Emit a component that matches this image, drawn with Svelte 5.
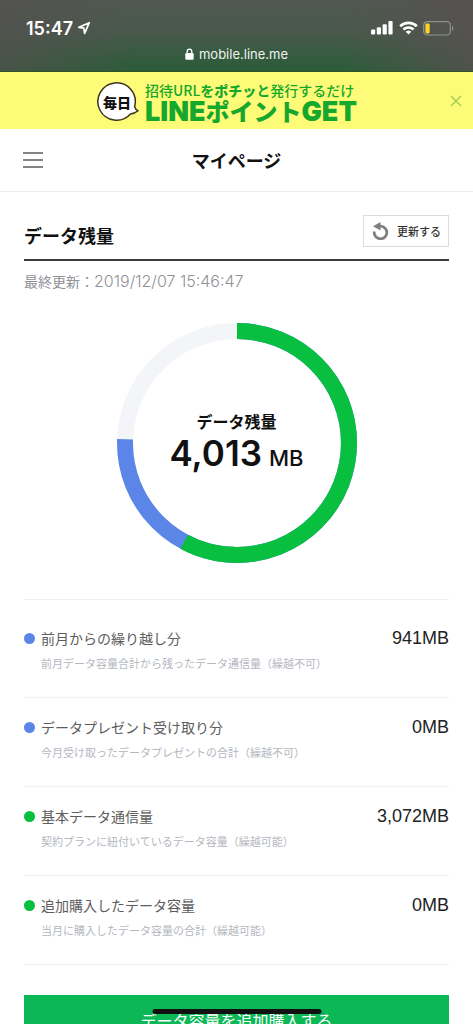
<script lang="ts">
	interface UsageItem {
		label: string;
		note: string;
		amount: number;
		color: string;
	}

	const items: UsageItem[] = [
		{
			label: '前月からの繰り越し分',
			note: '前月データ容量合計から残ったデータ通信量（繰越不可）',
			amount: 941,
			color: 'blue'
		},
		{
			label: 'データプレゼント受け取り分',
			note: '今月受け取ったデータプレゼントの合計（繰越不可）',
			amount: 0,
			color: 'blue'
		},
		{
			label: '基本データ通信量',
			note: '契約プランに紐付いているデータ容量（繰越可能）',
			amount: 3072,
			color: 'green'
		},
		{
			label: '追加購入したデータ容量',
			note: '当月に購入したデータ容量の合計（繰越可能）',
			amount: 0,
			color: 'green'
		}
	];

	const capacity = 5312;
	let showBanner = $state(true);

	const sumOf = (color: string) =>
		items.filter((item) => item.color === color).reduce((sum, item) => sum + item.amount, 0);

	const green = (sumOf('green') / capacity) * 100;
	const blue = (sumOf('blue') / capacity) * 100;
	const remaining = sumOf('green') + sumOf('blue');
</script>

<div class="screen">
	<div class="browser-bar">
		<div class="status">
			<span class="clock">
				15:47
				<svg width="14" height="14" viewBox="0 0 14 14" aria-hidden="true">
					<path d="M12.3 1.7 1.8 6.4l5 .7.8 5.2z" fill="none" stroke="#fff" stroke-width="1.7" stroke-linejoin="round" />
				</svg>
			</span>
			<span class="indicators">
				<svg width="23" height="14" viewBox="0 0 23 14" fill="#fff" aria-hidden="true">
					<rect x="0" y="8.5" width="4.2" height="5" rx="1" />
					<rect x="5.8" y="6.2" width="4.2" height="7.3" rx="1" />
					<rect x="11.6" y="3.2" width="4.2" height="10.3" rx="1" />
					<rect x="17.4" y="0" width="4.2" height="13.5" rx="1" />
				</svg>
				<svg width="19" height="14" viewBox="0 0 19 14" fill="none" stroke="#fff" aria-hidden="true">
					<path d="M1.2 5.2a12 12 0 0 1 16.6 0" stroke-width="2.6" />
					<path d="M4.4 8.5a7.4 7.4 0 0 1 10.2 0" stroke-width="2.5" />
					<path d="M9.5 13.6 6.7 10.8a4 4 0 0 1 5.6 0z" fill="#fff" stroke="none" />
				</svg>
				<svg width="31" height="15" viewBox="0 0 31 15" aria-hidden="true">
					<rect x="0.7" y="0.7" width="26.6" height="13.3" rx="3.6" fill="none" stroke="#8b948c" stroke-width="1.2" />
					<rect x="2.4" y="2.4" width="4.3" height="10" rx="1.4" fill="#fdd327" />
					<path d="M29 5v5c1.8-.7 1.8-4.3 0-5z" fill="#8b948c" />
				</svg>
			</span>
		</div>
		<div class="address">
			<svg width="9" height="12" viewBox="0 0 9 12" aria-hidden="true">
				<rect x="0.3" y="5" width="8.4" height="6.7" rx="1.2" fill="#fff" />
				<path d="M2.2 5.5V3.4a2.3 2.3 0 0 1 4.6 0v2.1" fill="none" stroke="#fff" stroke-width="1.3" />
			</svg>
			mobile.line.me
		</div>
	</div>

	{#if showBanner}
		<aside class="banner">
			<a class="banner-link" href="#invite">
				<span class="bubble">
					<svg width="42" height="40" viewBox="0 0 42 40" aria-hidden="true">
						<path
							d="M37.6 24.5A18.7 18.7 0 1 0 33.5 32Q38 31.5 41 28.8 38.5 27.800 37.6 24.5z"
							fill="#fff"
							stroke="#3a3520"
							stroke-width="1.5"
							stroke-linejoin="round"
						/>
					</svg>
					<span class="bubble-text">毎日</span>
				</span>
				<span class="banner-copy">
					<span class="banner-lead">招待URL<b>を</b><strong>ポチッ</strong><b>と</b>発行するだけ</span>
					<span class="banner-main"><span>LINE</span>ポイント<span>GET</span></span>
				</span>
			</a>
			<button class="banner-close" aria-label="閉じる" onclick={() => (showBanner = false)}>
				<svg width="12" height="12" viewBox="0 0 12 12" aria-hidden="true">
					<path d="M1 1l10 10M11 1 1 11" stroke="#a5cf52" stroke-width="1.5" />
				</svg>
			</button>
		</aside>
	{/if}

	<header class="header">
		<button class="menu" aria-label="メニュー">
			<svg width="20" height="16" viewBox="0 0 20 16" aria-hidden="true">
				<path d="M0 1h20M0 8h20M0 15h20" stroke="#858585" stroke-width="2" />
			</svg>
		</button>
		<h1>マイページ</h1>
	</header>

	<main>
		<div class="section-head">
			<h2>データ残量</h2>
			<button class="refresh">
				<svg width="17" height="18" viewBox="0 0 17 18" aria-hidden="true">
					<path d="M2.3 9.5A6.3 6.3 0 1 0 8.6 4.2H6" fill="none" stroke="#808080" stroke-width="2.8" />
					<path d="M1 4.2 8.5 0v8.4z" fill="#808080" />
				</svg>
				更新する
			</button>
		</div>
		<p class="updated">最終更新：<time datetime="2019-12-07T15:46:47">2019/12/07 15:46:47</time></p>

		<div class="chart">
			<svg viewBox="0 0 240 240" aria-hidden="true">
				<g fill="none" stroke-width="16" transform="rotate(-90 120 120)">
					<circle cx="120" cy="120" r="112" stroke="#f3f5f9" />
					<circle cx="120" cy="120" r="112" stroke="#5b85e7" pathLength="100" stroke-dasharray="{green + blue} 100" />
					<circle cx="120" cy="120" r="112" stroke="#08bf40" pathLength="100" stroke-dasharray="{green} 100" />
				</g>
			</svg>
			<div class="total">
				<span class="total-label">データ残量</span>
				<span class="total-value">{remaining.toLocaleString('en-US')}<small>MB</small></span>
			</div>
		</div>

		<dl class="usage">
			{#each items as item (item.label)}
				<div class="usage-row">
					<dt class={item.color}>{item.label}</dt>
					<dd class="amount">{item.amount.toLocaleString('en-US')}MB</dd>
					<dd class="note">{item.note}</dd>
				</div>
			{/each}
		</dl>

		<button class="purchase">データ容量を追加購入する</button>
	</main>

	<div class="home-indicator"></div>
</div>

<style>
	:global(body) {
		background: #fff;
	}

	.screen {
		position: relative;
		height: 100vh;
		overflow-y: auto;
		scrollbar-width: none;
		font-family: 'Noto Sans CJK JP', sans-serif;
		color: #111;
	}

	button {
		padding: 0;
		border: 0;
		background: none;
		font: inherit;
		color: inherit;
		cursor: pointer;
	}

	svg {
		display: block;
		flex: none;
	}

	h1,
	h2,
	p,
	dl,
	dd {
		margin: 0;
	}

	.browser-bar {
		box-sizing: border-box;
		height: 72px;
		padding-top: 17px;
		border-bottom: 1px solid #2f5326;
		background:
			linear-gradient(90deg, rgba(84, 80, 78, 0.7), rgba(84, 80, 78, 0) 28%, rgba(88, 80, 80, 0) 72%, rgba(88, 80, 80, 0.8)),
			linear-gradient(#505851, #49594c 45%, #2a5c38);
		font-family: Inter, sans-serif;
		color: #fff;
	}

	.status {
		display: flex;
		align-items: center;
		justify-content: space-between;
		height: 22px;
		padding: 0 19px 0 26px;
	}

	.clock {
		display: flex;
		align-items: center;
		gap: 4px;
		font-size: 18px;
		font-weight: 600;
	}

	.indicators {
		display: flex;
		align-items: center;
		gap: 5px;
	}

	.address {
		display: flex;
		align-items: center;
		justify-content: center;
		gap: 5px;
		height: 30px;
		font-size: 13px;
		color: #eef3ef;
	}

	.banner {
		position: relative;
		display: flex;
		align-items: center;
		justify-content: center;
		height: 57px;
		background: #fefb78;
	}

	.banner-link {
		display: flex;
		align-items: center;
		gap: 6px;
		padding: 3px 19px 0 0;
		color: #16a82c;
		text-decoration: none;
	}

	.bubble {
		display: grid;
		align-items: center;
	}

	.bubble > * {
		grid-area: 1 / 1;
	}

	.bubble-text {
		padding-left: 6px;
		font-size: 14px;
		font-weight: 900;
		line-height: 20px;
		color: #111;
	}

	.banner-copy {
		display: flex;
		flex-direction: column;
		white-space: nowrap;
	}

	.banner-lead {
		font-size: 14px;
		font-weight: 500;
		line-height: 18px;
	}

	.banner-lead strong {
		font-weight: 900;
	}

	.banner-main {
		font-size: 24px;
		font-weight: 900;
		line-height: 24px;
	}

	.banner-main span {
		font-family: Inter, sans-serif;
		font-size: 27px;
	}

	.banner-close {
		position: absolute;
		top: 23px;
		right: 11px;
	}

	.header {
		display: grid;
		grid-template-columns: 40px 1fr 40px;
		align-items: center;
		height: 62px;
		padding: 0 23px;
		border-bottom: 1px solid #ebebeb;
	}

	.menu {
		justify-self: start;
	}

	h1,
	h2 {
		font-size: 18px;
		font-weight: 700;
		line-height: 28px;
	}

	h1 {
		text-align: center;
	}

	main {
		padding: 23px 24px 32px;
	}

	.section-head {
		display: flex;
		align-items: flex-start;
		justify-content: space-between;
		padding-bottom: 10px;
		border-bottom: 2px solid #3c3c3c;
	}

	h2 {
		padding-top: 6px;
	}

	.refresh {
		display: flex;
		align-items: center;
		gap: 8px;
		height: 32px;
		padding: 0 7px 0 8px;
		border: 1px solid #dcdcdc;
		font-size: 11px;
		font-weight: 500;
		color: #333;
	}

	.updated {
		padding-top: 10px;
		font-size: 14px;
		line-height: 20px;
		color: #8f9196;
	}

	.updated time {
		font-family: Inter, sans-serif;
		font-size: 16px;
		font-weight: 300;
	}

	.chart {
		display: grid;
		place-items: center;
		margin: 32px 0 36px;
	}

	.chart > * {
		grid-area: 1 / 1;
	}

	.chart svg {
		width: 240px;
	}

	.total {
		display: flex;
		flex-direction: column;
		align-items: center;
	}

	.total-label {
		font-size: 16px;
		font-weight: 700;
		line-height: 24px;
	}

	.total-value {
		display: flex;
		align-items: baseline;
		gap: 7px;
		font-family: Inter, sans-serif;
		font-size: 35px;
		font-weight: 600;
		line-height: 40px;
	}

	.total-value small {
		font-size: 22px;
		font-weight: 500;
	}

	.usage {
		padding-top: 9px;
		border-top: 1px solid #f1f1f3;
	}

	.usage-row {
		display: grid;
		grid-template-columns: 1fr auto;
		align-items: center;
		padding: 17px 0 21px;
		border-bottom: 1px solid #f1f1f3;
	}

	dt {
		display: flex;
		align-items: center;
		gap: 6px;
		font-size: 14px;
		line-height: 24px;
		color: #5c5c5c;
	}

	dt::before {
		width: 11px;
		height: 11px;
		border-radius: 50%;
		background: #5b85e7;
		content: '';
	}

	dt.green::before {
		background: #08bf40;
	}

	.amount {
		font-family: 'Liberation Sans', sans-serif;
		font-size: 18px;
		line-height: 24px;
		color: #222;
	}

	.note {
		grid-column: 1 / -1;
		padding-left: 17px;
		font-size: 11px;
		line-height: 26px;
		color: #b4b7c0;
	}

	.purchase {
		width: 100%;
		height: 50px;
		margin-top: 30px;
		background: #0bb855;
		font-size: 16px;
		color: #fff;
	}

	.home-indicator {
		position: fixed;
		bottom: 10px;
		left: 50%;
		width: 169px;
		height: 5px;
		border-radius: 3px;
		background: #111;
		transform: translateX(-50%);
	}
</style>
